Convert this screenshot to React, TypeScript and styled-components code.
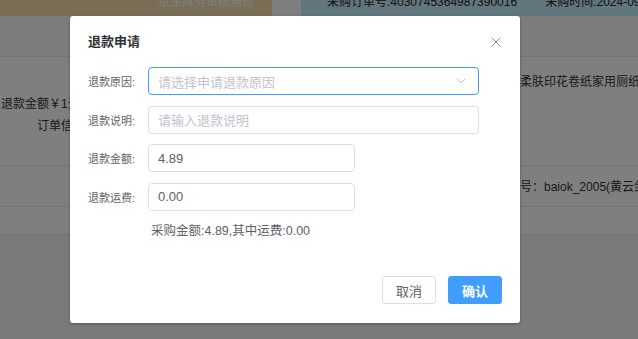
import styled, { createGlobalStyle } from 'styled-components'

const GlobalStyle = createGlobalStyle`
  html, body {
    margin: 0;
    padding: 0;
  }
  body {
    font-family: "Liberation Sans", "Noto Sans CJK SC", sans-serif;
    color: #333;
  }
`

const Page = styled.div`
  position: relative;
  width: 638px;
  height: 339px;
  overflow: hidden;
  background: #f4f4f4;
`

const StatusStrip = styled.div`
  display: flex;
  height: 16px;
  overflow: hidden;
`

const StripCell = styled.div<{ $bg: string; $width?: number; $justify?: string; $pad?: string }>`
  display: flex;
  justify-content: ${p => p.$justify || 'flex-start'};
  align-items: flex-start;
  gap: 28px;
  width: ${p => (p.$width ? `${p.$width}px` : 'auto')};
  flex: ${p => (p.$width ? 'none' : '1')};
  min-width: 0;
  background: ${p => p.$bg};
  padding: ${p => p.$pad || '0'};
  box-sizing: border-box;
  white-space: nowrap;
  overflow: hidden;
`

const StripText = styled.span<{ $color: string }>`
  font-size: 12px;
  line-height: 16px;
  margin-top: -6px;
  color: ${p => p.$color};
`

const TableRow = styled.div<{ $height: number; $bg?: string }>`
  display: flex;
  height: ${p => p.$height}px;
  background: ${p => p.$bg || '#fff'};
  border-bottom: 1px solid #e6e6e6;
  font-size: 12px;
  white-space: nowrap;
  overflow: hidden;
`

const LeftCell = styled.div`
  flex: none;
  width: 200px;
  padding-top: 36px;
  display: flex;
  flex-direction: column;
`

const CellLine = styled.div<{ $indent: number }>`
  line-height: 22px;
  padding-left: ${p => p.$indent}px;
  font-size: 12px;
`

const RightCell = styled.div<{ $top: number; $indent: number }>`
  flex: 1;
  min-width: 0;
  overflow: hidden;
  padding: ${p => p.$top}px 0 0 ${p => p.$indent}px;
  line-height: 18px;
`

const Mask = styled.div`
  position: absolute;
  inset: 0;
  background: rgba(0, 0, 0, 0.5);
`

const Dialog = styled.div`
  position: absolute;
  left: 70px;
  top: 16px;
  width: 450px;
  height: 307px;
  background: #fff;
  border-radius: 3px;
  box-shadow: 0 1px 3px rgba(0, 0, 0, 0.3);
  display: flex;
  flex-direction: column;
  box-sizing: border-box;
`

const DialogHeader = styled.div`
  display: flex;
  align-items: center;
  justify-content: space-between;
  padding: 16px 19px 0 18px;
  height: 20px;
  box-sizing: content-box;
`

const Title = styled.span`
  font-size: 13px;
  line-height: 20px;
  font-weight: bold;
  color: #303133;
`

const CloseIcon = () => (
  <svg width="10" height="10" viewBox="0 0 10 10">
    <path d="M0.5 0.5 L9.5 9.5 M9.5 0.5 L0.5 9.5" stroke="#909399" strokeWidth="1" fill="none" />
  </svg>
)

const Form = styled.div`
  display: flex;
  flex-direction: column;
  gap: 10.6px;
  padding: 15px 18px 0;
`

const FormItem = styled.div`
  display: flex;
  align-items: center;
  height: 28px;
`

const Label = styled.label`
  width: 60px;
  flex: none;
  font-size: 11px;
  color: #606266;
`

const InputBox = styled.div<{ $width: number; $focused?: boolean }>`
  width: ${p => p.$width}px;
  height: 28px;
  box-sizing: border-box;
  border: 1px solid ${p => (p.$focused ? '#409eff' : '#dcdfe6')};
  border-radius: 4px;
  display: flex;
  align-items: center;
  justify-content: space-between;
  padding: 0 12px 0 9px;
  font-size: 13px;
`

const Placeholder = styled.span`
  color: #c0c4cc;
`

const Value = styled.span`
  color: #606266;
`

const Chevron = () => (
  <svg width="10" height="6" viewBox="0 0 10 6">
    <path d="M0.5 0.5 L5 5 L9.5 0.5" stroke="#c0c4cc" strokeWidth="1" fill="none" />
  </svg>
)

const Hint = styled.div`
  margin: 10px 0 0 81px;
  font-size: 12.5px;
  line-height: 20px;
  color: #606266;
`

const Footer = styled.div`
  margin-top: auto;
  display: flex;
  justify-content: flex-end;
  gap: 12px;
  padding: 0 18px 19px;
`

const Button = styled.button<{ $primary?: boolean }>`
  width: 54px;
  height: 28px;
  border-radius: 3px;
  font-family: inherit;
  font-size: 13px;
  padding: 0;
  cursor: pointer;
  border: 1px solid ${p => (p.$primary ? '#409eff' : '#dcdfe6')};
  background: ${p => (p.$primary ? '#409eff' : '#fff')};
  color: ${p => (p.$primary ? '#fff' : '#606266')};
  font-weight: ${p => (p.$primary ? 'bold' : 'normal')};
`

export default function App() {
  return (
    <>
      <GlobalStyle />
      <Page>
        <StatusStrip>
          <StripCell $bg="#f2ddaa" $width={272} $justify="flex-end" $pad="0 18px 0 0">
            <StripText $color="#ffffff">京东财务审核通过</StripText>
          </StripCell>
          <StripCell $bg="#ffffff" $width={29} />
          <StripCell $bg="#c4ecfa" $pad="0 0 0 26px">
            <StripText $color="#222">采购订单号:4030745364987390016</StripText>
            <StripText $color="#222">采购时间:2024-09-05 10:21:33</StripText>
          </StripCell>
        </StatusStrip>
        <TableRow $height={40} $bg="#f8f8f8" />
        <TableRow $height={108}>
          <LeftCell>
            <CellLine $indent={1}>退款金额￥1元(含运费0元)</CellLine>
            <CellLine $indent={37}>订单信息</CellLine>
          </LeftCell>
          <RightCell $top={16} $indent={248}>维达蓝色经典柔肤印花卷纸家用厕纸整箱</RightCell>
        </TableRow>
        <TableRow $height={40}>
          <RightCell $top={12} $indent={484}>采购账号：baiok_2005(黄云剑)</RightCell>
        </TableRow>
        <TableRow $height={27} />
        <Mask />
        <Dialog>
          <DialogHeader>
            <Title>退款申请</Title>
            <CloseIcon />
          </DialogHeader>
          <Form>
            <FormItem>
              <Label>退款原因:</Label>
              <InputBox $width={331} $focused>
                <Placeholder>请选择申请退款原因</Placeholder>
                <Chevron />
              </InputBox>
            </FormItem>
            <FormItem>
              <Label>退款说明:</Label>
              <InputBox $width={331}>
                <Placeholder>请输入退款说明</Placeholder>
              </InputBox>
            </FormItem>
            <FormItem>
              <Label>退款金额:</Label>
              <InputBox $width={207}>
                <Value>4.89</Value>
              </InputBox>
            </FormItem>
            <FormItem>
              <Label>退款运费:</Label>
              <InputBox $width={207}>
                <Value>0.00</Value>
              </InputBox>
            </FormItem>
          </Form>
          <Hint>采购金额:4.89,其中运费:0.00</Hint>
          <Footer>
            <Button>取消</Button>
            <Button $primary>确认</Button>
          </Footer>
        </Dialog>
      </Page>
    </>
  )
}
